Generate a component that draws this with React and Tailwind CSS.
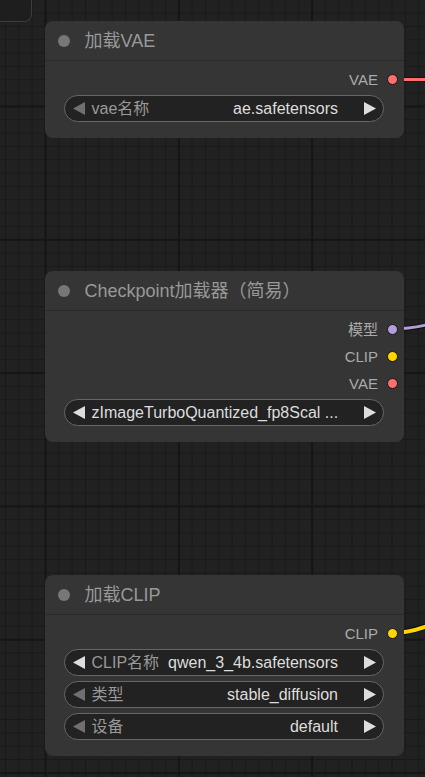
import React from 'react';

const FONT = "font-['Liberation_Sans','Noto_Sans_CJK_SC',sans-serif]";

function Arrow({ dir, dim }) {
  return (
    <svg width="12" height="13" viewBox="0 0 12 13" className="shrink-0">
      <polygon
        points={dir === 'left' ? '12,0 12,13 0,6.5' : '0,0 0,13 12,6.5'}
        fill={dim ? '#707070' : '#dddddd'}
      />
    </svg>
  );
}

function Widget({ label, value, dimLeft }) {
  return (
    <div className="h-[27px] flex items-center rounded-full border border-[#666] bg-[#222] pl-[8px] pr-[7px] text-[16px] leading-none">
      <Arrow dir="left" dim={dimLeft} />
      {label && <span className="ml-[6.5px] text-[#999] whitespace-nowrap">{label}</span>}
      <span className={`ml-auto text-[#ddd] whitespace-nowrap ${label ? 'pl-2' : 'pl-[6.5px]'}`}>{value}</span>
      <span className="w-[26px] shrink-0" />
      <Arrow dir="right" />
    </div>
  );
}

function Node({ pos, title, outputs, widgets }) {
  return (
    <div className={`absolute left-[45px] w-[359px] rounded-[8px] bg-[#353535] ${pos}`}>
      {/* title bar */}
      <div className="h-[40px] flex items-center pl-[13px] border-b border-[#2a2a2a]">
        <span className="w-3 h-3 rounded-full bg-[#777]" />
        <span className="ml-[14.5px] text-[18px] text-[#999] leading-none">{title}</span>
      </div>
      <div className="pt-[4.5px] pb-[15.5px]">
        {outputs.map((o) => (
          <div key={o.name} className="h-[27px] flex items-center justify-end pr-[6px] gap-[9px]">
            <span className="text-[15px] text-[#aaa] leading-none">{o.name}</span>
            <span className={`w-[11px] h-[11px] rounded-full border border-[#151515] ${o.color}`} />
          </div>
        ))}
        <div className="mt-[2.5px] ml-[19px] mr-[20px] flex flex-col gap-[5px]">
          {widgets.map((w, i) => (
            <Widget key={i} {...w} />
          ))}
        </div>
      </div>
    </div>
  );
}

export default function App() {
  return (
    <div
      className={`relative w-[425px] h-[777px] overflow-hidden bg-[#212121] ${FONT}
        bg-[linear-gradient(to_right,#151515_2px,transparent_2px),linear-gradient(to_bottom,#151515_2px,transparent_2px),linear-gradient(to_right,#191919_1px,transparent_1px),linear-gradient(to_bottom,#191919_1px,transparent_1px)]
        bg-[size:133.333px_133.333px,133.333px_133.333px,13.3333px_13.3333px,13.3333px_13.3333px]
        bg-[position:44.5px_238.8px,44.5px_238.8px,5px_12.7px,5px_12.7px]`}
    >
      {/* corner of another panel */}
      <div className="absolute left-0 top-0 w-[32px] h-[22px] bg-[#1e1e1e] border-r border-b border-[#3c3c3c] rounded-br-[8px]" />

      {/* links */}
      <svg className="absolute inset-0" width="425" height="777">
        <g fill="none" strokeLinecap="round">
          <path d="M392 79.5 L440 79.5" stroke="#000" strokeOpacity="0.5" strokeWidth="5" />
          <path d="M392 79.5 L440 79.5" stroke="#ff6e6e" strokeWidth="3" />
          <path d="M392 329 C415 329 430 325 480 310" stroke="#000" strokeOpacity="0.5" strokeWidth="5" />
          <path d="M392 329 C415 329 430 325 480 310" stroke="#b39ddb" strokeWidth="3" />
          <path d="M392 633 C415 633 432 626 500 592" stroke="#000" strokeOpacity="0.5" strokeWidth="6" />
          <path d="M392 633 C415 633 432 626 500 592" stroke="#ffd500" strokeWidth="4" />
        </g>
      </svg>

      <Node
        pos="top-[21px]"
        title="加载VAE"
        outputs={[{ name: 'VAE', color: 'bg-[#ff6e6e]' }]}
        widgets={[{ label: 'vae名称', value: 'ae.safetensors', dimLeft: true }]}
      />
      <Node
        pos="top-[271px]"
        title="Checkpoint加载器（简易）"
        outputs={[
          { name: '模型', color: 'bg-[#b39ddb]' },
          { name: 'CLIP', color: 'bg-[#ffd500]' },
          { name: 'VAE', color: 'bg-[#ff6e6e]' },
        ]}
        widgets={[{ label: '', value: 'zImageTurboQuantized_fp8Scal ...' }]}
      />
      <Node
        pos="top-[575px]"
        title="加载CLIP"
        outputs={[{ name: 'CLIP', color: 'bg-[#ffd500]' }]}
        widgets={[
          { label: 'CLIP名称', value: 'qwen_3_4b.safetensors' },
          { label: '类型', value: 'stable_diffusion', dimLeft: true },
          { label: '设备', value: 'default', dimLeft: true },
        ]}
      />
    </div>
  );
}
